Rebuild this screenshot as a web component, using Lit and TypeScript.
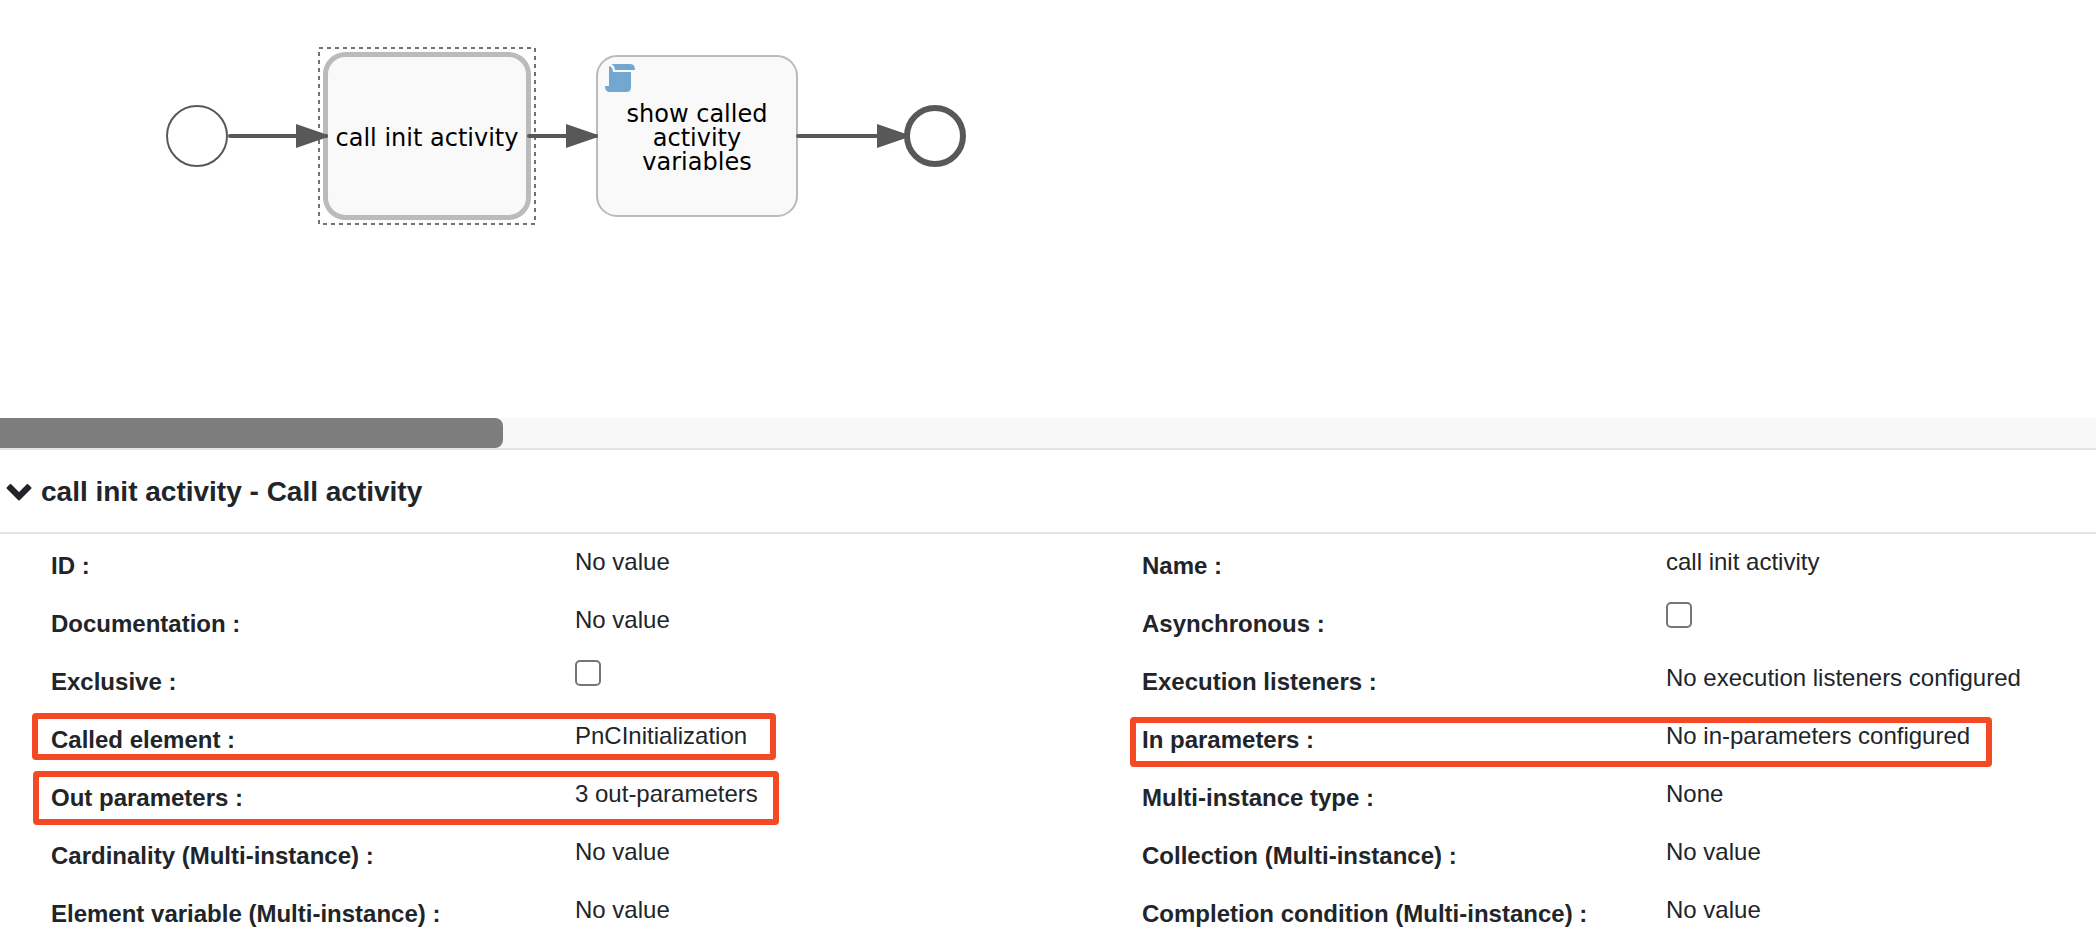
import { LitElement, html, css, svg, nothing } from "lit";
import { customElement, property } from "lit/decorators.js";

interface Field {
  id: string;
  label: string;
  value?: string;
  checkbox?: boolean;
  mark?: string;
}

const FIELDS: Field[] = [
  { id: "id", label: "ID", value: "No value" },
  { id: "name", label: "Name", value: "call init activity" },
  { id: "documentation", label: "Documentation", value: "No value" },
  { id: "asynchronous", label: "Asynchronous", checkbox: true },
  { id: "exclusive", label: "Exclusive", checkbox: true },
  { id: "execution-listeners", label: "Execution listeners", value: "No execution listeners configured" },
  { id: "called-element", label: "Called element", value: "PnCInitialization", mark: "mark-called" },
  { id: "in-parameters", label: "In parameters", value: "No in-parameters configured", mark: "mark-in" },
  { id: "out-parameters", label: "Out parameters", value: "3 out-parameters", mark: "mark-out" },
  { id: "mi-type", label: "Multi-instance type", value: "None" },
  { id: "cardinality", label: "Cardinality (Multi-instance)", value: "No value" },
  { id: "collection", label: "Collection (Multi-instance)", value: "No value" },
  { id: "element-variable", label: "Element variable (Multi-instance)", value: "No value" },
  { id: "completion", label: "Completion condition (Multi-instance)", value: "No value" },
];

@customElement("process-diagram")
export class ProcessDiagram extends LitElement {
  static styles = css`
    :host { display: block; overflow: hidden; }
    .canvas { display: block; }
    .event { fill: #fff; stroke: #585858; stroke-width: 2; }
    .end { stroke-width: 6; }
    .task { fill: #f9f9f9; stroke: #bbb; stroke-width: 2; }
    .selected { stroke-width: 5; }
    .outline { fill: none; stroke: #707070; stroke-width: 2; stroke-dasharray: 4 4; }
    .flow { stroke: #585858; stroke-width: 4; stroke-linecap: round; }
    .arrow { fill: #585858; }
    .script { fill: #72a7d0; }
    .caption { font: 24px Verdana, "DejaVu Sans", sans-serif; fill: #000; text-anchor: middle; }
  `;

  private flow(from: number, to: number) {
    return svg`
      <line class="flow" x1=${from} y1="136" x2=${to - 2} y2="136"></line>
      <path class="arrow" d="M${to - 32} 124 L${to} 135 V137 L${to - 32} 148 Z"></path>`;
  }

  render() {
    return html`
      <svg class="canvas" width="1000" height="418" viewBox="0 0 1000 418" role="img" aria-label="Process diagram">
        <circle class="event" cx="197" cy="136" r="30"></circle>
        <rect class="task selected" x="325.5" y="54.5" width="203" height="163" rx="20"></rect>
        <rect class="outline" x="319" y="48" width="216" height="176"></rect>
        <rect class="task" x="597" y="56" width="200" height="160" rx="20"></rect>
        ${this.flow(230, 328)} ${this.flow(529, 598)} ${this.flow(798, 909)}
        <circle class="event end" cx="935" cy="136" r="28"></circle>
        <path class="script" d="M611 64 H630.5 Q635 64 635 70 H615 Q614.500 65 611 64 Z"></path>
        <path class="script" d="M609 66 Q613 67 613 72 H631 V87 Q631 92 626.5 92 H610 Q605 92 605 86 H609 Z"></path>
        <text class="caption" x="427" y="146">call init activity</text>
        <text class="caption" x="697" y="122">show called</text>
        <text class="caption" x="697" y="146">activity</text>
        <text class="caption" x="697" y="170">variables</text>
      </svg>
    `;
  }
}

@customElement("property-field")
export class PropertyField extends LitElement {
  @property({ attribute: false }) field!: Field;

  static styles = css`
    :host { display: block; }
    .field { position: relative; display: grid; grid-template-columns: 25vw 1fr; height: 58px; line-height: 36px; white-space: nowrap; }
    .label { padding-top: 14px; font-weight: 700; }
    .value { padding-top: 10px; }
    .check {
      appearance: none; display: block; box-sizing: border-box; width: 26px; height: 26px; margin: 0;
      border: 2px solid #767676; border-radius: 5px; background: #fff;
    }
    .check:checked { background: #767676; }
    .mark { position: absolute; box-sizing: border-box; border: 6px solid #f54824; border-radius: 4px; pointer-events: none; }
    .mark-called { left: -19px; top: 5px; width: 744px; height: 47px; }
    .mark-out { left: -18px; top: 5px; width: 746px; height: 54px; }
    .mark-in { left: -12px; top: 9px; width: 862px; height: 50px; }
  `;

  render() {
    const f = this.field;
    return html`
      <div class="field">
        ${f.checkbox
          ? html`<label class="label" for=${f.id}>${f.label} :</label>
              <span class="value"><input class="check" id=${f.id} type="checkbox" /></span>`
          : html`<span class="label">${f.label} :</span><span class="value">${f.value}</span>`}
        ${f.mark ? html`<span class="mark ${f.mark}"></span>` : nothing}
      </div>
    `;
  }
}

@customElement("app-root")
export class AppRoot extends LitElement {
  static styles = css`
    :host {
      display: flex; flex-direction: column; height: 100vh; overflow: hidden; background: #fff;
      color: #212529; font: 24px "Liberation Sans", Arial, sans-serif;
    }
    .track { flex: none; height: 30px; background: #f8f8f8; }
    .thumb { width: 24vw; height: 30px; border-radius: 0 8px 8px 0; background: #7d7d7d; }
    .panel { flex: 1; min-height: 0; overflow: hidden; border-top: 2px solid #e4e4e4; }
    .title { margin: 0; border-bottom: 2px solid #e4e4e4; font-size: 28px; line-height: 42px; }
    .toggle {
      display: flex; align-items: center; gap: 9px; width: 100%; padding: 21px 6px 19px; border: 0;
      background: none; color: inherit; font: inherit; text-align: left; cursor: pointer;
    }
    .chevron { fill: currentColor; stroke: currentColor; stroke-width: 2; stroke-linejoin: round; }
    .fields { display: grid; grid-template-columns: 1091fr 954fr; padding-left: 51px; }
  `;

  render() {
    return html`
      <process-diagram></process-diagram>
      <div class="track"><div class="thumb"></div></div>
      <section class="panel">
        <h2 class="title">
          <button class="toggle" type="button" aria-expanded="true">
            <svg class="chevron" width="26" height="18" viewBox="0 0 26 18"><path d="M4.500 2 L13 10.500 L21.500 2 L24.500 5 L13 16.500 L1.500 5 Z"></path></svg>
            call init activity - Call activity
          </button>
        </h2>
        <div class="fields">${FIELDS.map((f) => html`<property-field .field=${f}></property-field>`)}</div>
      </section>
    `;
  }
}
